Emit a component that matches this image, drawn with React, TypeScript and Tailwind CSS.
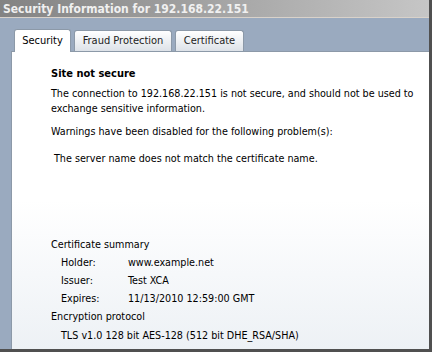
export default function App() {
  const font = { fontFamily: '"DejaVu Sans Condensed", "Liberation Sans", Arial, sans-serif' };
  const tabs = ["Security", "Fraud Protection", "Certificate"];
  const rows = [
    ["Holder:", "www.example.net"],
    ["Issuer:", "Test XCA"],
    ["Expires:", "11/13/2010 12:59:00 GMT"],
  ];

  return (
    <div className="h-[355px] w-[434px] overflow-hidden bg-white" style={font}>
      <div className="flex h-[352px] w-[432px] flex-col border-b-[3px] border-r-[3px] border-[#505050]">
        <div className="flex h-[17px] items-center bg-gradient-to-r from-[#838383] via-[#a4a4a4] to-[#c6c6c6] pl-[3px] text-[12px] font-bold leading-none text-[#f0f0f0]">
          Security Information for 192.168.22.151
        </div>
        <div className="h-px bg-[#d9d2ca]" />

        <div className="flex flex-1 flex-col bg-[#9aaabf] pl-[11px] pt-[11px]">
          <div className="flex items-end gap-[3px] pl-[3px]">
            {tabs.map((t, i) =>
              i === 0 ? (
                <div
                  key={t}
                  className="relative -mb-px flex h-[23px] w-[57px] items-center justify-center rounded-t-[3px] border border-b-0 border-[#8c99a8] bg-white text-[11px] text-black"
                >
                  {t}
                </div>
              ) : (
                <div
                  key={t}
                  className={`flex h-[21px] items-center justify-center rounded-t-[3px] border border-b-0 border-[#8c99a8] bg-gradient-to-b from-white to-[#dde2e8] text-[11px] text-[#222] ${
                    i === 1 ? "w-[98px]" : "w-[69px]"
                  }`}
                >
                  {t}
                </div>
              )
            )}
          </div>

          <div className="flex-1 border-l border-t border-[#8c99a8] bg-gradient-to-b from-white via-white to-[#edf1f5] pl-[39px] pt-[15px] text-[10.7px] leading-[14px] text-black">
            <div className="text-[11px] font-bold">Site not secure</div>
            <p className="mt-[5px] leading-[15px]">
              The connection to 192.168.22.151 is not secure, and should not be used to exchange sensitive information.
            </p>
            <p className="mt-[9px]">Warnings have been disabled for the following problem(s):</p>
            <p className="mt-[13px] pl-[3px]">The server name does not match the certificate name.</p>

            <div className="mt-[72px]">Certificate summary</div>
            <div className="mt-[2px] flex flex-col pl-[10px]">
              {rows.map(([k, v]) => (
                <div key={k} className="flex h-[18px] items-center">
                  <span className="w-[67px]">{k}</span>
                  <span>{v}</span>
                </div>
              ))}
            </div>
            <div className="flex h-[18px] items-center">Encryption protocol</div>
            <div className="mt-[3px] pl-[10px]">TLS v1.0 128 bit AES-128 (512 bit DHE_RSA/SHA)</div>
          </div>
        </div>
      </div>
    </div>
  );
}
